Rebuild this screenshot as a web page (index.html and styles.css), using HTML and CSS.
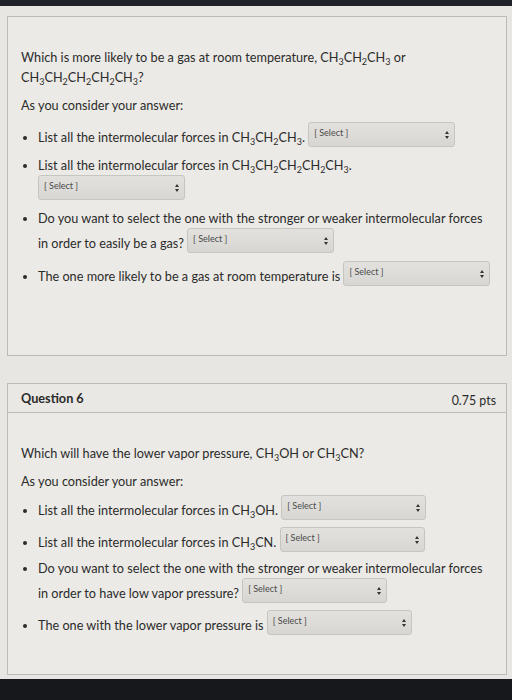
FILE: index.html
```html
<!DOCTYPE html>
<html lang="en">
<head>
    <meta charset="UTF-8">
    <title>Quiz</title>
    <link rel="stylesheet" href="styles.css">
</head>
<body>
    <div class="topbar"></div>

    <div class="card first">
        <div class="card-body">
            <p class="question">Which is more likely to be a gas at room temperature, CH<sub>3</sub>CH<sub>2</sub>CH<sub>3</sub> or CH<sub>3</sub>CH<sub>2</sub>CH<sub>2</sub>CH<sub>2</sub>CH<sub>3</sub>?</p>
            <p>As you consider your answer:</p>
            <ul>
                <li>List all the intermolecular forces in CH<sub>3</sub>CH<sub>2</sub>CH<sub>3</sub>. <span class="select w147">[ Select ]</span></li>
                <li>List all the intermolecular forces in CH<sub>3</sub>CH<sub>2</sub>CH<sub>2</sub>CH<sub>2</sub>CH<sub>3</sub>.<br><span class="select w147">[ Select ]</span></li>
                <li>Do you want to select the one with the stronger or weaker intermolecular forces in order to easily be a gas? <span class="select w147">[ Select ]</span></li>
                <li>The one more likely to be a gas at room temperature is <span class="select w147">[ Select ]</span></li>
            </ul>
        </div>
    </div>

    <div class="card second">
        <div class="card-header">
            <span class="title">Question 6</span>
            <span class="pts">0.75 pts</span>
        </div>
        <div class="card-body">
            <p class="question">Which will have the lower vapor pressure, CH<sub>3</sub>OH or CH<sub>3</sub>CN?</p>
            <p>As you consider your answer:</p>
            <ul>
                <li>List all the intermolecular forces in CH<sub>3</sub>OH. <span class="select w145">[ Select ]</span></li>
                <li>List all the intermolecular forces in CH<sub>3</sub>CN. <span class="select w145">[ Select ]</span></li>
                <li>Do you want to select the one with the stronger or weaker intermolecular forces in order to have low vapor pressure? <span class="select w145">[ Select ]</span></li>
                <li>The one with the lower vapor pressure is <span class="select w145">[ Select ]</span></li>
            </ul>
        </div>
    </div>

    <div class="bottombar"></div>
</body>
</html>
```

FILE: styles.css
```css
body {
    margin: 0;
    background: #e7e6e2;
    font-family: Lato, "Open Sans", sans-serif;
    font-size: 12.7px;
    color: #2b2b2b;
}
.topbar {
    height: 6px;
    background: #1f2229;
    margin-bottom: 10px;
}
.bottombar {
    height: 21px;
    background: #17181b;
    margin-top: 4px;
}
.card {
    margin: 0 5px 0 7px;
    border: 1px solid #bcbcb7;
    background: #ebeae6;
}
.card.first {
    height: 338px;
}
.card.second {
    margin-top: 27px;
    height: 290px;
}
.card-header {
    display: flex;
    justify-content: space-between;
    align-items: center;
    height: 28px;
    padding: 0 10px 0 13px;
    border-bottom: 1px solid #bcbcb7;
    background: #e9e8e4;
}
.title {
    font-weight: bold;
}
.pts {
    font-size: 12.4px;
    padding-top: 5px;
}
.card-body {
    padding: 0 14px 0 13px;
}
.first .card-body {
    padding-top: 30px;
}
.second .card-body {
    padding-top: 30px;
}
p {
    margin: 0 0 8px;
    line-height: 20px;
}
sub {
    font-size: 9px;
    vertical-align: -3px;
    line-height: 0;
}
ul {
    margin: -1px 0 0;
    padding-left: 17px;
}
li {
    line-height: 20px;
}
li + li {
    margin-top: 8px;
}
.second ul {
    margin-top: -4px;
}
.second li {
    line-height: 19px;
}
.second li + li {
    margin-top: 7px;
}
.select {
    display: inline-block;
    position: relative;
    overflow: hidden;
    box-sizing: border-box;
    height: 25px;
    vertical-align: -5px;
    padding: 4px 0 0 5px;
    line-height: 12px;
    font-size: 9px;
    color: #4a4a4a;
    border: 1px solid #c6c6c1;
    border-radius: 3px;
    background: linear-gradient(#e2e1dd, #dddcd8 50%, #d7d6d2);
}
.select::before,
.select::after {
    content: "";
    position: absolute;
    right: 5px;
    width: 0;
    height: 0;
    border-left: 2.5px solid transparent;
    border-right: 2.5px solid transparent;
}
.select::before {
    top: 8px;
    border-bottom: 3px solid #333;
}
.select::after {
    top: 13px;
    border-top: 3px solid #333;
}
.w147 {
    width: 147px;
}
.w145 {
    width: 145px;
}
```
